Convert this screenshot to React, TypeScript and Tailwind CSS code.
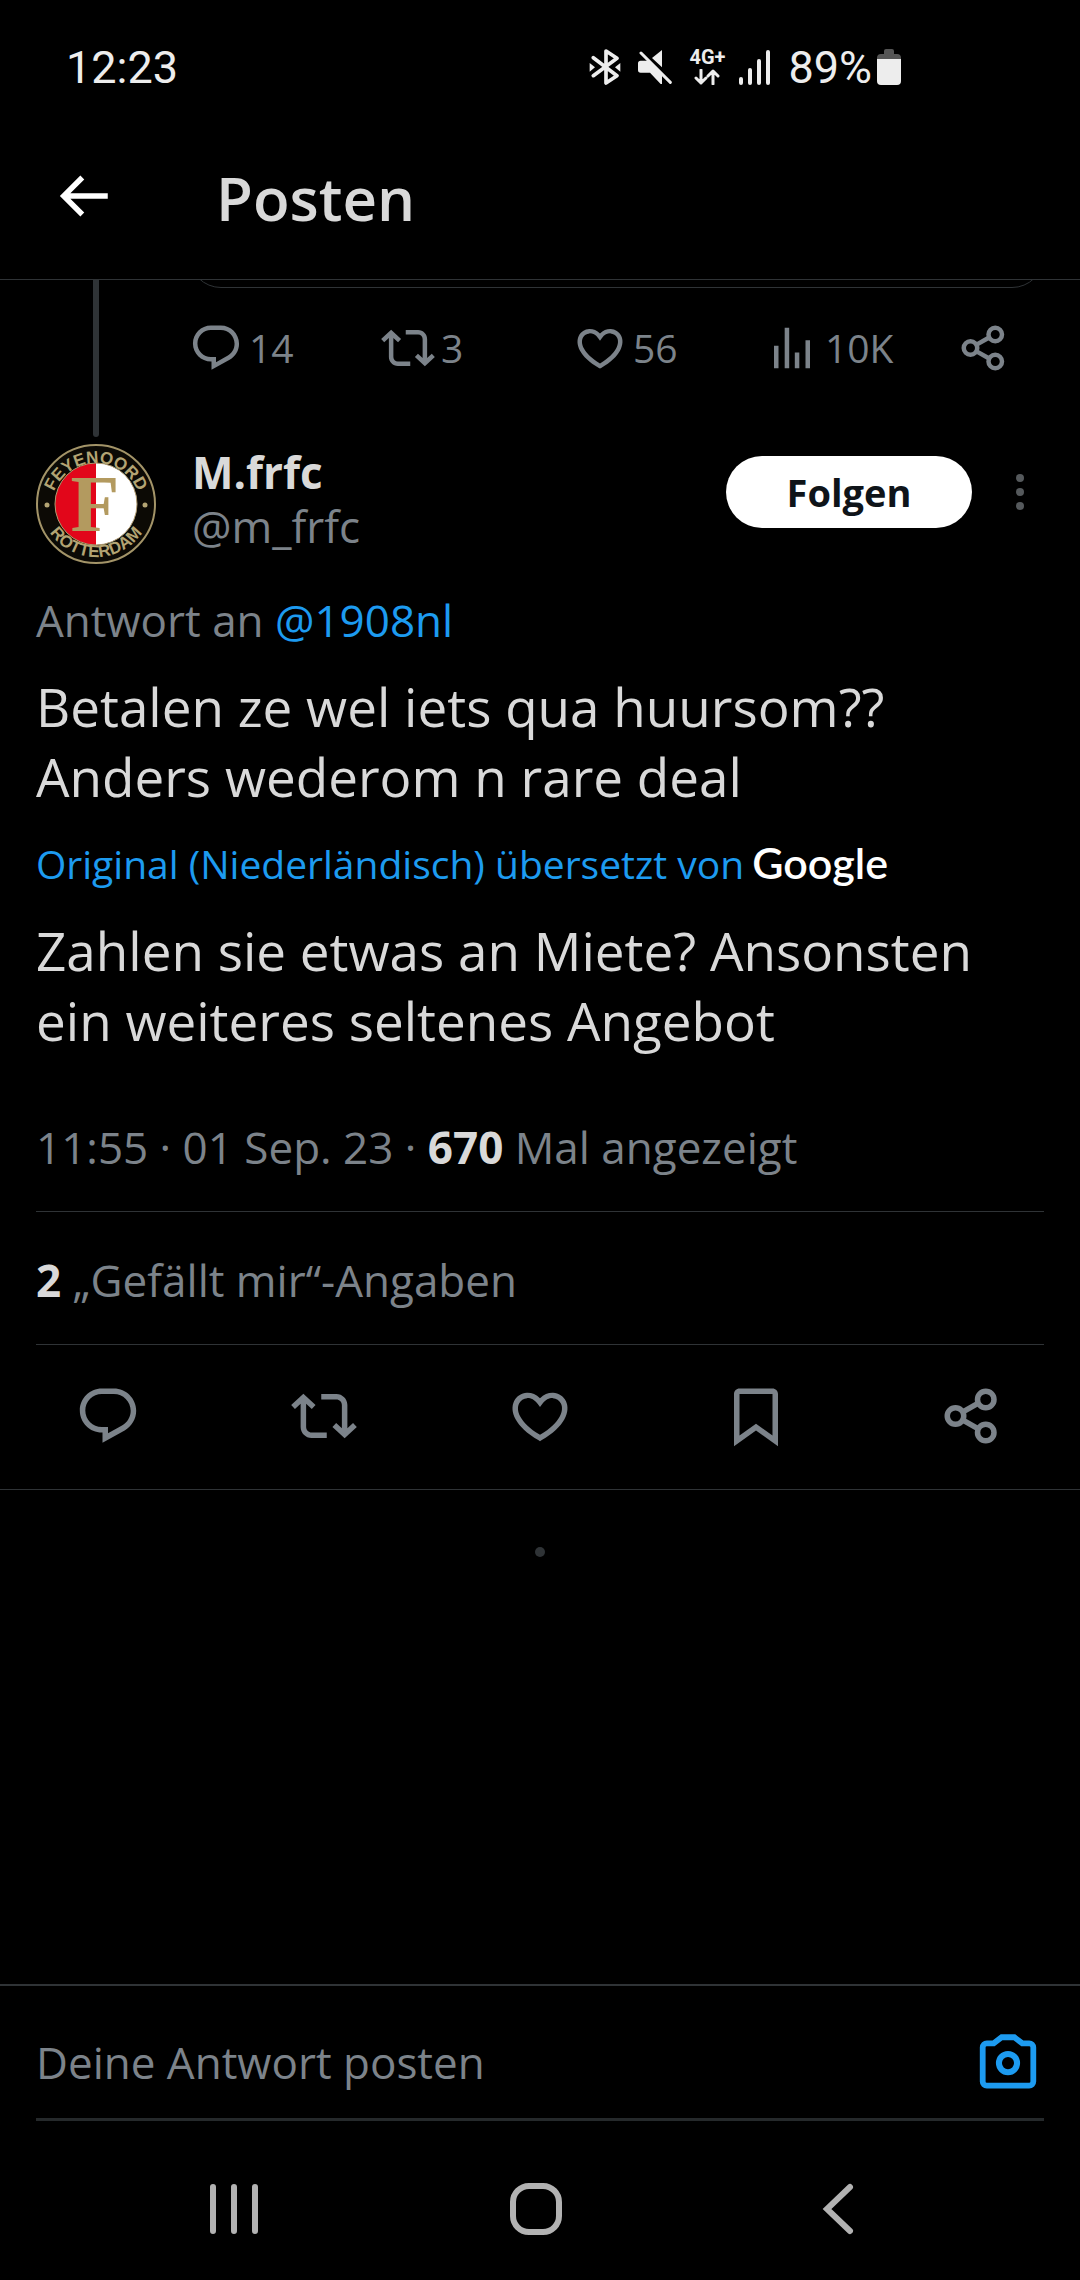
import type { ReactNode } from "react";

function Icon({ children, className = "size-[66px]" }: { children: ReactNode; className?: string }) {
  return (
    <svg viewBox="0 0 24 24" className={`${className} shrink-0 fill-current`} aria-hidden="true">
      {children}
    </svg>
  );
}

const replyShape = (
  <path d="M1.751 10c0-4.42 3.584-8 8.005-8h4.366c4.49 0 8.129 3.64 8.129 8.13 0 2.96-1.607 5.68-4.196 7.11l-8.054 4.46v-3.69h-.067c-4.49.1-8.183-3.51-8.183-8.01zm8.005-6c-3.317 0-6.005 2.69-6.005 6 0 3.37 2.77 6.08 6.138 6.01l.351-.01h1.761v2.3l5.087-2.81c1.951-1.08 3.163-3.13 3.163-5.36 0-3.39-2.744-6.13-6.129-6.13H9.756z" />
);
const repostShape = (
  <path d="M4.5 3.88l4.432 4.14-1.364 1.46L5.5 7.55V16c0 1.1.896 2 2 2H13v2H7.5c-2.209 0-4-1.79-4-4V7.55L1.432 9.48.068 8.02 4.5 3.88zM16.5 6H11V4h5.5c2.209 0 4 1.79 4 4v8.45l2.068-1.93 1.364 1.46-4.432 4.14-4.432-4.14 1.364-1.46 2.068 1.93V8c0-1.1-.896-2-2-2z" />
);
const heartShape = (
  <path d="M16.697 5.5c-1.222-.06-2.679.51-3.89 2.16l-.805 1.09-.806-1.09C9.984 6.01 8.526 5.44 7.304 5.5c-1.243.07-2.349.78-2.91 1.91-.552 1.12-.633 2.78.479 4.82 1.074 1.97 3.257 4.27 7.129 6.61 3.87-2.34 6.052-4.64 7.126-6.61 1.111-2.04 1.03-3.7.477-4.82-.561-1.13-1.666-1.84-2.908-1.91zm4.187 7.69c-1.351 2.48-4.001 5.12-8.379 7.67l-.503.3-.504-.3c-4.379-2.55-7.029-5.19-8.382-7.67-1.36-2.5-1.41-4.86-.514-6.67.887-1.79 2.647-2.91 4.601-3.01 1.651-.09 3.368.56 4.798 2.01 1.429-1.45 3.146-2.1 4.796-2.01 1.954.1 3.714 1.22 4.601 3.01.896 1.81.846 4.17-.514 6.67z" />
);
const viewsShape = <path d="M8.75 21V3h2v18h-2zM18 21V8.5h2V21h-2zM4 21V11h2v10H4zm9.248 0v-7h2v7h-2z" />;
const bookmarkShape = (
  <path fillRule="evenodd" d="M4 4c0-1.1.9-2 2-2h12c1.1 0 2 .9 2 2v19l-8-5.75L4 23V4zm2 0v15.1l6-4.3 6 4.3V4H6z" />
);
const shareShape = (
  <g fill="none" stroke="currentColor" strokeWidth="2">
    <circle cx="17" cy="6" r="3" />
    <circle cx="6" cy="12" r="3" />
    <circle cx="17" cy="18" r="3" />
    <path d="M8.7 10.5L14.3 7.3M8.7 13.5l5.6 3.2" />
  </g>
);

function StatusBar() {
  return (
    <div className="flex h-[134px] items-center justify-between pr-[179px] pl-[66px] font-['Roboto',sans-serif] text-[45px] leading-none text-[#ededed]">
      <span>12:23</span>
      <div className="flex items-center">
        <svg viewBox="0 0 96 108" className="h-9 w-8" aria-label="Bluetooth">
          <path d="M13 26L84 80L51 102V6L84 28L13 80" fill="none" stroke="currentColor" strokeWidth="11" strokeLinejoin="round" strokeLinecap="round" />
          <path d="M2 42v26l16-13zM94 42v26L78 55z" fill="currentColor" />
        </svg>
        <svg viewBox="0 0 102 102" className="ml-[17px] size-[34px]" aria-label="Ton aus">
          <path d="M72 0v52L42 24zM8 32h22l42 40v30h-4L36 68H8q-8 0-8-8V40q0-8 8-8z" fill="currentColor" />
          <path d="M9 9l88 88" stroke="currentColor" strokeWidth="9" strokeLinecap="round" />
        </svg>
        <div className="ml-[17px] flex w-9 flex-col items-center gap-1">
          <span className="text-[20px] leading-[16px] font-bold">4G+</span>
          <svg viewBox="0 0 26 16" className="h-4 w-[26px]" aria-hidden="true">
            <path d="M7 1v13M2 9l5 5 5-5M19 15V2M14 7l5-5 5 5" fill="none" stroke="currentColor" strokeWidth="3" strokeLinecap="round" strokeLinejoin="round" />
          </svg>
        </div>
        <svg viewBox="0 0 32 35" className="ml-[14px] h-[35px] w-8" aria-label="Signal">
          <path d="M2 29v4M11 20v13M20 11v22M29 2v31" stroke="currentColor" strokeWidth="4" strokeLinecap="round" />
        </svg>
        <span className="ml-[17px]">89%</span>
        <svg viewBox="0 0 24 36" className="ml-[5px] h-9 w-6" aria-label="Akku">
          <path d="M7 5V2q0-2 2-2h6q2 0 2 2v3h3q4 0 4 4v2H0V9q0-4 4-4z" fill="#555" />
          <path d="M0 10h24v22q0 4-4 4H4q-4 0-4-4z" fill="currentColor" />
        </svg>
      </div>
    </div>
  );
}

function Crest() {
  return (
    <svg viewBox="0 0 120 120" className="size-[120px] shrink-0" role="img" aria-label="Feyenoord Rotterdam">
      <defs>
        <path id="crest-top" d="M15 64A45 45 0 1 1 105 64" />
        <path id="crest-bottom" d="M4 57A56 56 0 1 0 116 57" />
      </defs>
      <circle cx="60" cy="60" r="59" fill="#0c0a05" stroke="#a39468" strokeWidth="2" />
      <path d="M60 19a41 41 0 0 0 0 82z" fill="#e2061a" />
      <path d="M60 19a41 41 0 0 1 0 82z" fill="#fff" />
      <circle cx="60" cy="60" r="41" fill="none" stroke="#b09a70" strokeWidth="1" />
      <text x="59" y="87" textAnchor="middle" fill="#b39a5f" className="font-['Liberation_Serif',serif] text-[80px] font-bold">F</text>
      <g fill="#b3a473" className="font-['Liberation_Sans',sans-serif] text-[17px] font-bold">
        <text textAnchor="middle"><textPath href="#crest-top" startOffset="50%">FEYENOORD</textPath></text>
        <text textAnchor="middle"><textPath href="#crest-bottom" startOffset="50%">ROTTERDAM</textPath></text>
        <circle cx="11" cy="61" r="2.5" />
        <circle cx="109" cy="61" r="2.5" />
      </g>
    </svg>
  );
}

const parentStats = [
  { label: "Antworten", count: "14", shape: replyShape },
  { label: "Reposts", count: "3", shape: repostShape },
  { label: "Gefällt mir", count: "56", shape: heartShape },
  { label: "Aufrufe", count: "10K", shape: viewsShape },
  { label: "Teilen", count: "", shape: shareShape },
];

const postActions = [
  { label: "Antworten", shape: replyShape },
  { label: "Reposten", shape: repostShape },
  { label: "Gefällt mir", shape: heartShape },
  { label: "Lesezeichen", shape: bookmarkShape },
  { label: "Teilen", shape: shareShape },
];

export default function App() {
  return (
    <div className="flex min-h-screen flex-col overflow-x-hidden bg-black font-['Open_Sans',sans-serif] text-[44px] leading-[60px] text-[#7c838a]">
      <StatusBar />
      <header className="flex items-center gap-[100px] border-b border-[#2f3336] pt-[29px] pb-[50px] pl-[50px]">
        <button aria-label="Zurück" className="text-white">
          <Icon>
            <path d="M7.414 13l5.043 5.04-1.414 1.42L3.586 12l7.457-7.46 1.414 1.42L7.414 11H21v2H7.414z" />
          </Icon>
        </button>
        <h1 className="pt-1 text-[60px] leading-[62px] font-semibold text-[#d9d9d9]">Posten</h1>
      </header>

      <main className="flex flex-1 flex-col">
        <section className="flex pr-9 pl-9">
          <div className="flex w-[120px] shrink-0 justify-center pb-[7px]">
            <div className="w-[6px] rounded-b-full bg-[#2f3336]" />
          </div>
          <div className="flex-1 pl-[33px]">
            <div className="flex h-2 flex-col justify-end overflow-hidden">
              <div className="h-20 shrink-0 rounded-[32px] border border-[#2f3336]" />
            </div>
            <div className="flex justify-between pt-[33px] pr-[33px] pb-[69px]">
              {parentStats.map((s) => (
                <button key={s.label} aria-label={s.label} className="flex w-[54px] items-center gap-[6px] text-[39px] leading-[54px]">
                  <Icon className="size-[54px]">{s.shape}</Icon>
                  {s.count && <span>{s.count}</span>}
                </button>
              ))}
            </div>
          </div>
        </section>

        <article>
          <div className="flex items-start pr-[42px] pl-9">
            <Crest />
            <div className="flex flex-1 flex-col pt-px pl-9 leading-[54px]">
              <span className="font-bold text-[#d9d9d9]">M.frfc</span>
              <span>@m_frfc</span>
            </div>
            <button className="mt-3 h-[72px] w-[246px] rounded-full bg-white text-[38px] leading-[54px] font-bold text-[#0f1419]">
              Folgen
            </button>
            <button aria-label="Mehr" className="mt-3 ml-[30px] flex h-[72px] w-9 flex-col items-center justify-center gap-[6px]">
              <span className="size-2 rounded-full bg-[#55595c]" />
              <span className="size-2 rounded-full bg-[#55595c]" />
              <span className="size-2 rounded-full bg-[#55595c]" />
            </button>
          </div>

          <div className="px-9">
            <p className="mt-[26px]">
              Antwort an <a href="#1908nl" className="text-[#1d9bf0]">@1908nl</a>
            </p>
            <p className="mt-[22px] text-[53px] leading-[70px] text-[#d9d9d9]">
              Betalen ze wel iets qua huursom??
              <br />
              Anders wederom n rare deal
            </p>
            <p className="mt-6 flex items-baseline gap-2 text-[39px] leading-[54px]">
              <a href="#original" className="text-[#1d9bf0]">Original (Niederländisch) übersetzt von</a>
              <span className="font-['Lato',sans-serif] text-[43px] font-semibold text-white">Google</span>
            </p>
            <p className="mt-[25px] text-[53px] leading-[70px] text-[#d9d9d9]">
              Zahlen sie etwas an Miete? Ansonsten ein weiteres seltenes Angebot
            </p>
            <p className="mt-[61px] border-b border-[#2f3336] pb-[34px]">
              11:55 · 01 Sep. 23 · <strong className="text-[#d9d9d9]">670</strong> Mal angezeigt
            </p>
            <p className="border-b border-[#2f3336] pt-[38px] pb-[34px]">
              <strong className="text-[#d9d9d9]">2</strong> „Gefällt mir“-Angaben
            </p>
          </div>

          <div className="grid grid-cols-5 border-b border-[#2f3336] pt-[38px] pb-10">
            {postActions.map((a) => (
              <button key={a.label} aria-label={a.label} className="flex justify-center">
                <Icon>{a.shape}</Icon>
              </button>
            ))}
          </div>
        </article>
        <div className="mx-auto mt-[57px] size-[10px] rounded-full bg-[#2f3336]" />
      </main>

      <form className="border-t-2 border-[#2f3336] px-9">
        <div className="flex items-center border-b-3 border-[#25292b] pt-[43px] pb-[23px]">
          <input
            type="text"
            aria-label="Deine Antwort posten"
            placeholder="Deine Antwort posten"
            className="min-w-0 flex-1 bg-transparent outline-none placeholder:text-[#7c838a]"
          />
          <button type="button" aria-label="Kamera" className="mr-[3px] text-[#1d9bf0]">
            <Icon>
              <g fill="none" stroke="currentColor">
                <path strokeWidth="2.1" d="M9.7 3h4.6l2.9 2.2h2.5a1.5 1.5 0 0 1 1.5 1.5v12.4a1.5 1.5 0 0 1-1.5 1.5H4.3a1.5 1.5 0 0 1-1.5-1.5V6.7a1.5 1.5 0 0 1 1.5-1.5h2.5z" />
                <circle cx="12" cy="12.4" r="3.3" strokeWidth="2.2" />
              </g>
            </Icon>
          </button>
        </div>
      </form>

      <nav className="flex justify-between pt-[55px] pr-[209px] pb-[38px] pl-[201px] text-[#b2b2b2]">
        <button aria-label="Letzte Apps">
          <svg viewBox="0 0 66 66" className="size-[66px]">
            <path d="M12 11v44M33 11v44M54 11v44" stroke="currentColor" strokeWidth="6" strokeLinecap="round" />
          </svg>
        </button>
        <button aria-label="Startseite">
          <svg viewBox="0 0 66 66" className="size-[66px]">
            <rect x="10" y="10" width="46" height="46" rx="16" fill="none" stroke="currentColor" strokeWidth="6" />
          </svg>
        </button>
        <button aria-label="Zurück zur vorigen App">
          <svg viewBox="0 0 66 66" className="size-[66px]">
            <path d="M45 11L22 33l23 22" fill="none" stroke="currentColor" strokeWidth="6" strokeLinecap="round" />
          </svg>
        </button>
      </nav>
    </div>
  );
}
